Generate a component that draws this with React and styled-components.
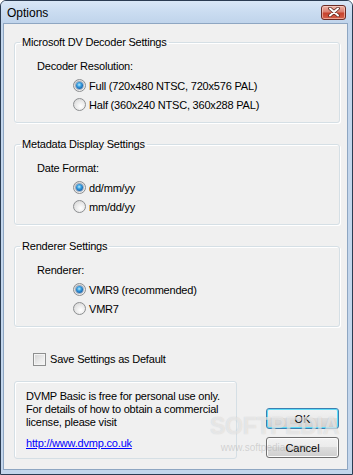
import React from 'react';
import styled, { createGlobalStyle } from 'styled-components';

const GlobalStyle = createGlobalStyle`
  html, body {
    margin: 0;
    padding: 0;
    background: #ffffff;
  }
  body {
    font-family: "Liberation Sans", Arial, sans-serif;
    font-size: 11px;
    color: #000;
  }
`;

const Window = styled.div`
  position: relative;
  box-sizing: border-box;
  width: 353px;
  height: 475px;
  border: 1px solid #2b3c52;
  border-radius: 6px 6px 0 0;
  background: #c3d6ec;
  display: flex;
  flex-direction: column;
  padding: 0 4px 4px 2px;
  overflow: hidden;
`;

const TitleBar = styled.div`
  height: 22px;
  flex: none;
  display: flex;
  align-items: center;
  justify-content: space-between;
  padding: 0 4px 0 6px;
  margin: 0 -4px 0 -2px;
  background: linear-gradient(#d9e7f6 0%, #cadcf1 50%, #c0d4eb 100%);
`;

const Title = styled.span`
  font-size: 12px;
  color: #000;
  padding-top: 1px;
`;

const CloseButton = styled.div`
  width: 23px;
  height: 13px;
  margin-right: 2px;
  border: 1px solid #6b2b24;
  border-radius: 3px;
  background: linear-gradient(#edb3a6 0%, #db7f70 45%, #c7422d 55%, #d4604a 100%);
  box-shadow: inset 0 0 0 1px rgba(255, 220, 210, 0.55);
  display: flex;
  align-items: center;
  justify-content: center;
`;

const Content = styled.div`
  flex: 1;
  position: relative;
  background: #f0f0f0;
  border: 1px solid #8ea6c2;
  display: flex;
  flex-direction: column;
  padding: 11px 7px 10px 10px;
`;

const Group = styled.fieldset`
  margin: 0 0 14px 0;
  padding: 0 5px 8px 5px;
  border: 1px solid #d5dfe5;
  border-radius: 3px;
  box-shadow: inset 1px 1px 0 #fff, 1px 1px 0 #fff;
  min-width: 0;
`;

const Legend = styled.legend`
  padding: 0 2px;
  margin-left: 0;
  line-height: 14px;
  letter-spacing: -0.2px;
`;

const FieldLabel = styled.div`
  margin: 10px 0 3px 17px;
  line-height: 14px;
  letter-spacing: -0.2px;
`;

const RadioRow = styled.label`
  display: flex;
  align-items: center;
  height: 19px;
  padding-left: 53px;
  gap: 3px;
  letter-spacing: -0.2px;
`;

const RadioCircle = styled.span`
  box-sizing: border-box;
  width: 13px;
  height: 13px;
  border-radius: 50%;
  border: 1px solid #8c8e90;
  background: radial-gradient(circle at 60% 65%, #ffffff 0%, #e6e6e6 55%, #cfcfcf 100%);
  display: flex;
  align-items: center;
  justify-content: center;

  &::after {
    content: '';
    display: ${({ checked }) => (checked ? 'block' : 'none')};
    width: 7px;
    height: 7px;
    border-radius: 50%;
    background: radial-gradient(circle at 45% 40%, #b8ecff 0%, #3aa0e0 35%, #1766b0 70%, #0c3d74 100%);
    box-shadow: 0 0 0 1px rgba(20, 60, 110, 0.35);
  }
`;

const CheckRow = styled.label`
  display: flex;
  align-items: center;
  gap: 4px;
  margin: 11px 0 15px 19px;
  height: 14px;
  letter-spacing: -0.2px;
`;

const CheckBox = styled.span`
  box-sizing: border-box;
  width: 13px;
  height: 13px;
  border: 1px solid #8e8f8f;
  background: linear-gradient(135deg, #d2d2d2 0%, #ececec 60%, #f6f6f6 100%);
  box-shadow: inset 0 0 0 1px #f4f4f4;
`;

const BottomRow = styled.div`
  display: flex;
  align-items: flex-end;
  justify-content: space-between;
  padding-right: 1px;
`;

const InfoBox = styled.div`
  box-sizing: border-box;
  width: 223px;
  height: 78px;
  border: 1px solid #d5dfe5;
  border-radius: 3px;
  box-shadow: inset 1px 1px 0 #fff;
  padding: 8px 0 0 11px;
  line-height: 13px;
  letter-spacing: -0.2px;
`;

const Link = styled.a`
  display: inline-block;
  margin-top: 8px;
  color: #0000ff;
  text-decoration: underline;
`;

const Buttons = styled.div`
  position: relative;
  z-index: 1;
  display: flex;
  flex-direction: column;
  gap: 8px;
  margin-bottom: 1px;
`;

const Button = styled.button`
  box-sizing: border-box;
  width: 73px;
  height: 21px;
  padding: 0;
  font-family: "Liberation Sans", Arial, sans-serif;
  font-size: 11px;
  color: #000;
  border-radius: 3px;
  border: 1px solid ${({ focused }) => (focused ? '#3c7fb1' : '#707070')};
  background: linear-gradient(#f2f2f2 0%, #ebebeb 50%, #dddddd 50%, #cfcfcf 100%);
  box-shadow: inset 0 0 0 1px ${({ focused }) => (focused ? '#5ddcf8' : '#fcfcfc')};
`;

const Watermark = styled.div`
  position: absolute;
  right: 8px;
  bottom: 31px;
  font-family: "Liberation Sans", Arial, sans-serif;
  font-size: 23px;
  font-weight: bold;
  letter-spacing: -0.3px;
  line-height: 24px;
  color: rgba(255, 255, 255, 0.55);
  text-shadow: 0 0 1px rgba(140, 140, 140, 0.4);
  pointer-events: none;
  z-index: 2;
`;

const WatermarkUrl = styled.div`
  position: absolute;
  right: 40px;
  bottom: 16px;
  font-size: 10px;
  color: rgba(160, 160, 160, 0.4);
  pointer-events: none;
  z-index: 2;
`;

const Radio = ({ checked, children }) => (
  <RadioRow>
    <RadioCircle checked={checked} />
    <span>{children}</span>
  </RadioRow>
);

const groups = [
  {
    title: 'Microsoft DV Decoder Settings',
    label: 'Decoder Resolution:',
    options: ['Full (720x480 NTSC, 720x576 PAL)', 'Half (360x240 NTSC, 360x288 PAL)'],
  },
  {
    title: 'Metadata Display Settings',
    label: 'Date Format:',
    options: ['dd/mm/yy', 'mm/dd/yy'],
  },
  {
    title: 'Renderer Settings',
    label: 'Renderer:',
    options: ['VMR9 (recommended)', 'VMR7'],
  },
];

export default function App() {
  return (
    <>
      <GlobalStyle />
      <Window>
        <TitleBar>
          <Title>Options</Title>
          <CloseButton>
            <svg width="12" height="10" viewBox="0 0 12 10">
              <path d="M2 1.5 L10 8.5 M10 1.5 L2 8.5" stroke="#5a2a22" strokeWidth="3.6" strokeLinecap="round" />
              <path d="M2 1.5 L10 8.5 M10 1.5 L2 8.5" stroke="#ffffff" strokeWidth="2" strokeLinecap="round" />
            </svg>
          </CloseButton>
        </TitleBar>
        <Content>
          {groups.map((g) => (
            <Group key={g.title}>
              <Legend>{g.title}</Legend>
              <FieldLabel>{g.label}</FieldLabel>
              {g.options.map((o, i) => (
                <Radio key={o} checked={i === 0}>
                  {o}
                </Radio>
              ))}
            </Group>
          ))}
          <CheckRow>
            <CheckBox />
            <span>Save Settings as Default</span>
          </CheckRow>
          <BottomRow>
            <InfoBox>
              DVMP Basic is free for personal use only.
              <br />
              For details of how to obtain a commercial
              <br />
              license, please visit
              <br />
              <Link href="#">http://www.dvmp.co.uk</Link>
            </InfoBox>
            <Buttons>
              <Button focused>OK</Button>
              <Button>Cancel</Button>
            </Buttons>
          </BottomRow>
          <Watermark>SOFTPEDIA</Watermark>
          <WatermarkUrl>www.softpedia.com</WatermarkUrl>
        </Content>
      </Window>
    </>
  );
}
